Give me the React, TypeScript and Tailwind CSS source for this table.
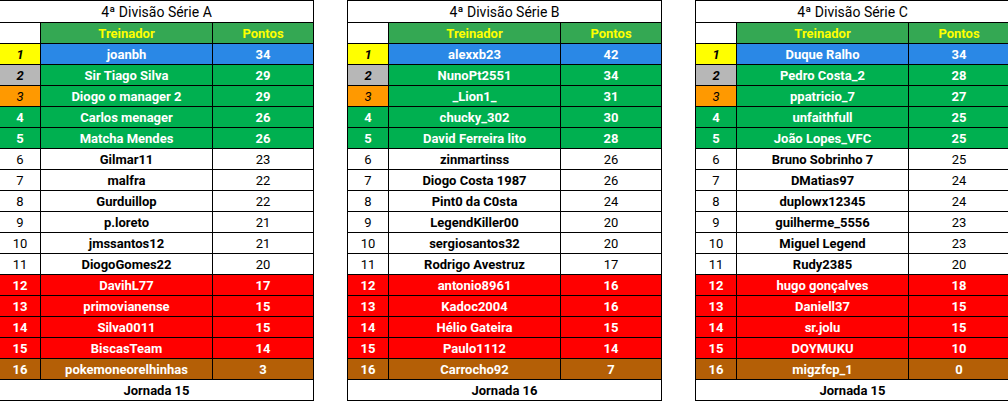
import React from "react";

type Row = [string, number];

const tables: { title: string; footer: string; rows: Row[] }[] = [
  {
    title: "4ª Divisão Série A",
    footer: "Jornada 15",
    rows: [
      ["joanbh", 34],
      ["Sir Tiago Silva", 29],
      ["Diogo o manager 2", 29],
      ["Carlos menager", 26],
      ["Matcha Mendes", 26],
      ["Gilmar11", 23],
      ["malfra", 22],
      ["Gurduillop", 22],
      ["p.loreto", 21],
      ["jmssantos12", 21],
      ["DiogoGomes22", 20],
      ["DavihL77", 17],
      ["primovianense", 15],
      ["Silva0011", 15],
      ["BiscasTeam", 14],
      ["pokemoneorelhinhas", 3],
    ],
  },
  {
    title: "4ª Divisão Série B",
    footer: "Jornada 16",
    rows: [
      ["alexxb23", 42],
      ["NunoPt2551", 34],
      ["_Lion1_", 31],
      ["chucky_302", 30],
      ["David Ferreira lito", 28],
      ["zinmartinss", 26],
      ["Diogo Costa 1987", 26],
      ["Pint0 da C0sta", 24],
      ["LegendKiller00", 20],
      ["sergiosantos32", 20],
      ["Rodrigo Avestruz", 17],
      ["antonio8961", 16],
      ["Kadoc2004", 16],
      ["Hélio Gateira", 15],
      ["Paulo1112", 14],
      ["Carrocho92", 7],
    ],
  },
  {
    title: "4ª Divisão Série C",
    footer: "Jornada 15",
    rows: [
      ["Duque Ralho", 34],
      ["Pedro Costa_2", 28],
      ["ppatricio_7", 27],
      ["unfaithfull", 25],
      ["João Lopes_VFC", 25],
      ["Bruno Sobrinho 7", 25],
      ["DMatias97", 24],
      ["duplowx12345", 24],
      ["guilherme_5556", 23],
      ["Miguel Legend", 23],
      ["Rudy2385", 20],
      ["hugo gonçalves", 18],
      ["Daniell37", 15],
      ["sr.jolu", 15],
      ["DOYMUKU", 10],
      ["migzfcp_1", 0],
    ],
  },
];

function rowStyle(pos: number) {
  if (pos === 1)
    return {
      p: "bg-[#ffff00] text-black italic font-bold",
      n: "bg-[#2a88e6] text-white font-bold",
      v: "bg-[#2a88e6] text-white font-bold",
    };
  if (pos === 2)
    return {
      p: "bg-[#b7b7b7] text-black italic font-bold",
      n: "bg-[#00b050] text-white font-bold",
      v: "bg-[#00b050] text-white font-bold",
    };
  if (pos === 3)
    return {
      p: "bg-[#ff9900] text-black italic",
      n: "bg-[#00b050] text-white font-bold",
      v: "bg-[#00b050] text-white font-bold",
    };
  if (pos <= 5)
    return {
      p: "bg-[#00b050] text-white font-bold",
      n: "bg-[#00b050] text-white font-bold",
      v: "bg-[#00b050] text-white font-bold",
    };
  if (pos <= 11)
    return {
      p: "bg-white text-black",
      n: "bg-white text-black font-bold",
      v: "bg-white text-black",
    };
  if (pos <= 15)
    return {
      p: "bg-[#ff0000] text-white font-bold",
      n: "bg-[#ff0000] text-white font-bold",
      v: "bg-[#ff0000] text-white font-bold",
    };
  return {
    p: "bg-[#b45f06] text-white font-bold",
    n: "bg-[#b45f06] text-white font-bold",
    v: "bg-[#b45f06] text-white font-bold",
  };
}

const cell = "flex items-center justify-center leading-none whitespace-nowrap";

function Table({ title, footer, rows }: { title: string; footer: string; rows: Row[] }) {
  return (
    <div className="grid shrink-0 grid-cols-[40px_171px_100px] grid-rows-[21px_repeat(18,20px)] gap-px bg-black p-px text-[13px]">
      <div className={`${cell} col-span-3 bg-white text-[14px] text-black`}>{title}</div>
      <div className="bg-white" />
      <div className={`${cell} bg-[#34a853] font-bold text-[#ffff00]`}>Treinador</div>
      <div className={`${cell} bg-[#34a853] font-bold text-[#ffff00]`}>Pontos</div>
      {rows.map(([name, pts], i) => {
        const s = rowStyle(i + 1);
        return (
          <React.Fragment key={i}>
            <div className={`${cell} ${s.p}`}>{i + 1}</div>
            <div className={`${cell} ${s.n}`}>{name}</div>
            <div className={`${cell} ${s.v}`}>{pts}</div>
          </React.Fragment>
        );
      })}
      <div className={`${cell} col-span-3 bg-white font-bold text-black`}>{footer}</div>
    </div>
  );
}

export default function App() {
  return (
    <div
      className="h-[402px] w-[1008px] overflow-hidden bg-white"
      style={{ fontFamily: "Roboto, 'Liberation Sans', sans-serif" }}
    >
      <div className="-ml-px flex gap-[33px]">
        {tables.map((t) => (
          <Table key={t.title} {...t} />
        ))}
      </div>
    </div>
  );
}
